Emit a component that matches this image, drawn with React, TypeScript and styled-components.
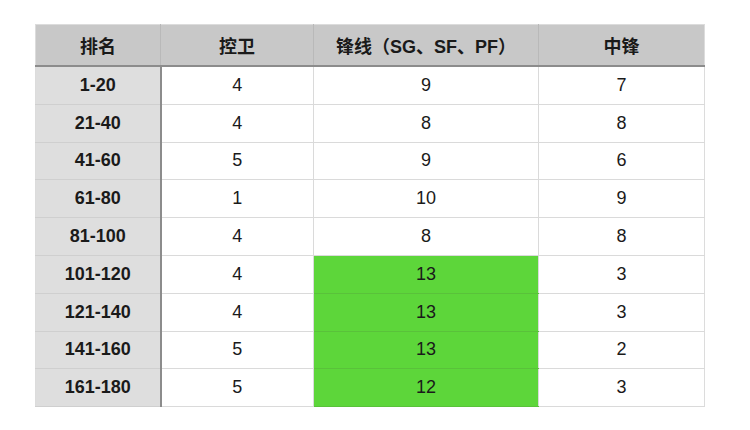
import styled, { createGlobalStyle } from "styled-components";

const GlobalStyle = createGlobalStyle`
  html, body {
    margin: 0;
    padding: 0;
    background: #ffffff;
  }
  body {
    font-family: "Liberation Sans", Arial, "Noto Sans CJK SC", sans-serif;
    color: #1a1a1a;
  }
`;

interface Row {
  rank: string;
  guard: number;
  forward: number;
  center: number;
}

const rows: Row[] = [
  { rank: "1-20", guard: 4, forward: 9, center: 7 },
  { rank: "21-40", guard: 4, forward: 8, center: 8 },
  { rank: "41-60", guard: 5, forward: 9, center: 6 },
  { rank: "61-80", guard: 1, forward: 10, center: 9 },
  { rank: "81-100", guard: 4, forward: 8, center: 8 },
  { rank: "101-120", guard: 4, forward: 13, center: 3 },
  { rank: "121-140", guard: 4, forward: 13, center: 3 },
  { rank: "141-160", guard: 5, forward: 13, center: 2 },
  { rank: "161-180", guard: 5, forward: 12, center: 3 },
];

const App = () => {
  return (
    <Page>
      <GlobalStyle />
      <Table>
        <colgroup>
          <col style={{ width: 125 }} />
          <col style={{ width: 153 }} />
          <col style={{ width: 225 }} />
          <col style={{ width: 166 }} />
        </colgroup>
        <thead>
          <tr>
            <HeadCell first>排名</HeadCell>
            <HeadCell>控卫</HeadCell>
            <HeadCell>锋线（SG、SF、PF）</HeadCell>
            <HeadCell>中锋</HeadCell>
          </tr>
        </thead>
        <tbody>
          {rows.map(row => (
            <tr key={row.rank}>
              <RankCell>{row.rank}</RankCell>
              <Cell>{row.guard}</Cell>
              <Cell highlight={row.forward >= 12}>{row.forward}</Cell>
              <Cell>{row.center}</Cell>
            </tr>
          ))}
        </tbody>
      </Table>
    </Page>
  );
};

export default App;

const Page = styled.div`
  padding: 24px 0 0 35px;
`;

const Table = styled.table`
  width: 669px;
  table-layout: fixed;
  border-collapse: collapse;
  font-size: 18px;
  border: 1px solid #dcdcdc;
`;

const HeadCell = styled.th<{ first?: boolean }>`
  height: 40px;
  padding: 0;
  background: #c8c8c8;
  font-weight: 700;
  text-align: center;
  color: #1a1a1a;
  border-left: ${({ first }) => (first ? "none" : "1px solid #b9b9b9")};
  border-bottom: 2px solid #8c8c8c;
`;

const RankCell = styled.td`
  height: 36.8px;
  padding: 0;
  background: #dedede;
  font-weight: 700;
  text-align: center;
  border-bottom: 1px solid #cfcfcf;
  border-right: 2px solid #8c8c8c;
`;

const Cell = styled.td<{ highlight?: boolean }>`
  height: 36.8px;
  padding: 0;
  text-align: center;
  background: ${({ highlight }) => (highlight ? "#5dd63a" : "#ffffff")};
  border-bottom: 1px solid ${({ highlight }) => (highlight ? "#59c23a" : "#dadada")};
  border-left: 1px solid #dadada;
`;
